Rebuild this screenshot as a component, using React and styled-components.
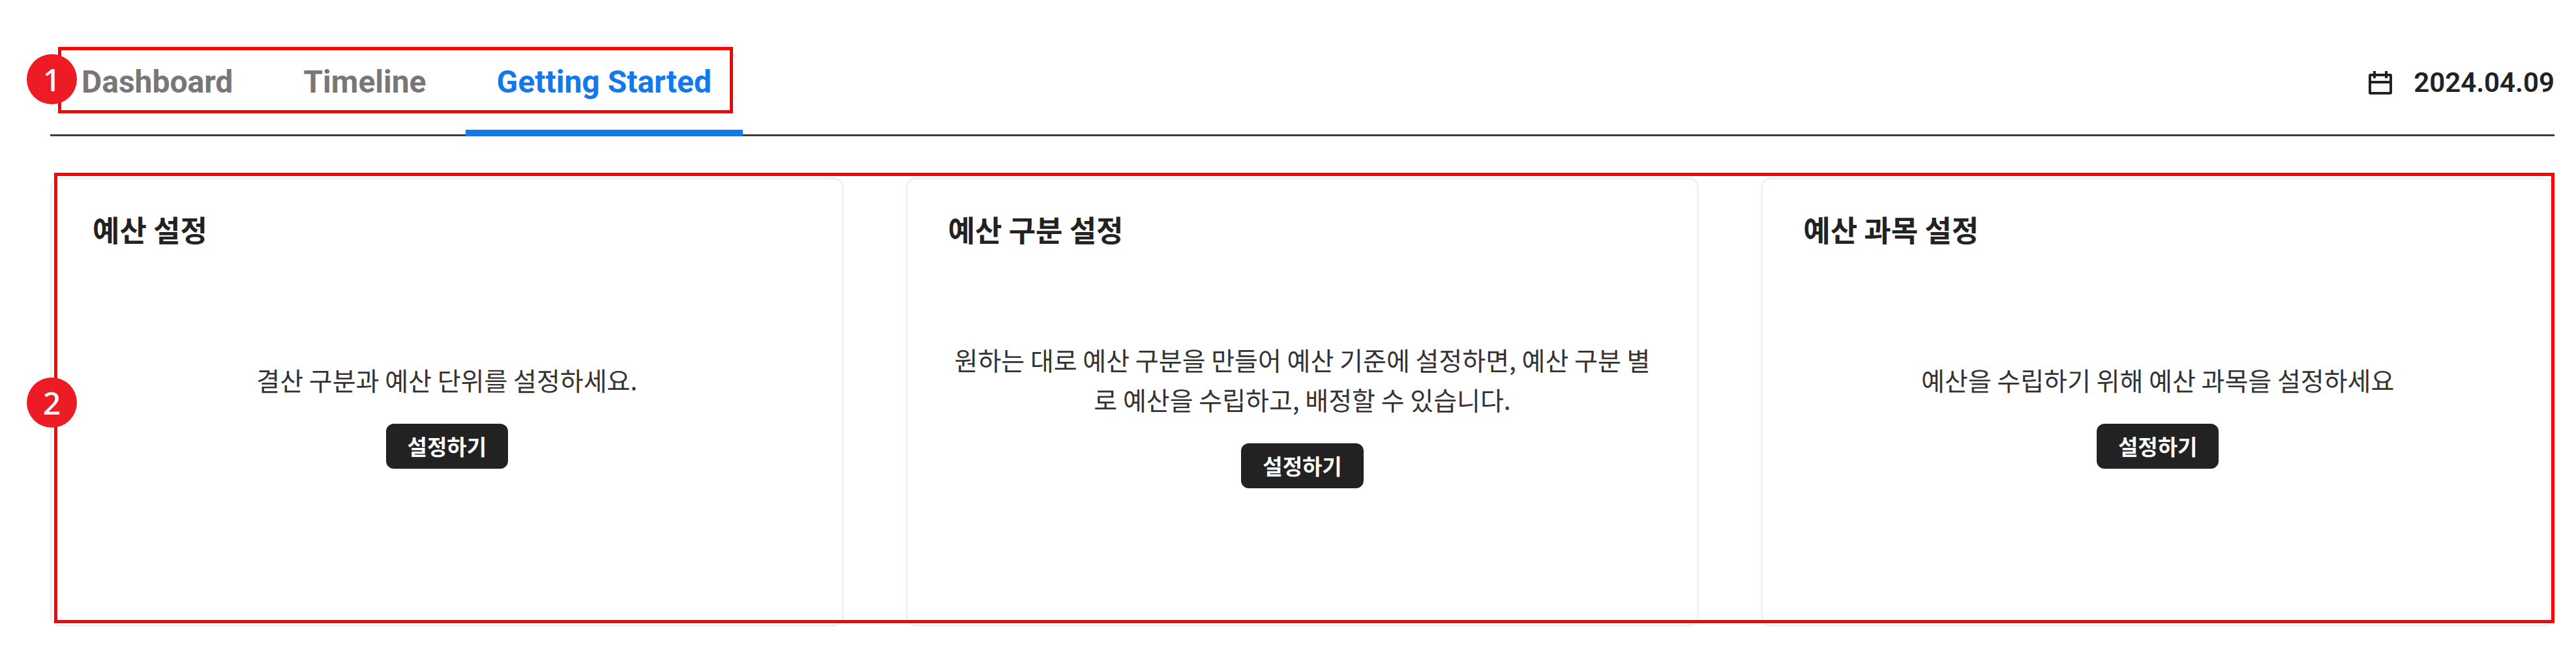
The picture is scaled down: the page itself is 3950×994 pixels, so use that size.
import React, { useState } from 'react';
import styled, { createGlobalStyle } from 'styled-components';

const GlobalStyle = createGlobalStyle`
  * {
    box-sizing: border-box;
  }

  body {
    margin: 0;
    background: #ffffff;
    color: #222222;
    font-family: Roboto, 'Noto Sans CJK KR', sans-serif;
  }

  button {
    border: 0;
    font-family: inherit;
    cursor: pointer;
  }
`;

const Page = styled.main`
  padding: 72px 33px 33px 77px;
`;

const Header = styled.header`
  display: flex;
  justify-content: space-between;
  align-items: flex-start;
  border-bottom: 3px solid #3c3e3f;
`;

const TabList = styled.nav`
  position: relative;
  display: flex;
  gap: 12px;
  margin-bottom: -3px;
`;

const Tab = styled.button`
  padding: 26px 48px 45px;
  border-bottom: 10px solid ${props => (props.$active ? '#1379eb' : 'transparent')};
  background: none;
  color: ${props => (props.$active ? '#1379eb' : '#777777')};
  font-size: 48px;
  font-weight: 700;
  line-height: 56px;
`;

const Today = styled.div`
  display: flex;
  align-items: center;
  gap: 33px;
  padding-top: 30px;
  font-size: 42px;
  font-weight: 600;
  line-height: 50px;
`;

const Cards = styled.section`
  position: relative;
  display: grid;
  grid-template-columns: repeat(3, 1fr);
  gap: 95px;
  margin-top: 63px;
`;

const Card = styled.article`
  display: flex;
  flex-direction: column;
  min-height: 689px;
  padding: 43px 62px 74px;
  border: 3px solid #f0f0f0;
  border-radius: 16px;
  font-family: 'Noto Sans CJK KR', sans-serif;
`;

const CardTitle = styled.h2`
  margin: 0;
  font-size: 45px;
  font-weight: 700;
  line-height: 68px;
`;

const CardBody = styled.div`
  display: flex;
  flex: 1;
  flex-direction: column;
  align-items: center;
  justify-content: center;
  gap: 37px;
`;

const Description = styled.p`
  margin: 0;
  color: #333333;
  font-size: 39px;
  line-height: 61px;
  text-align: center;
`;

const SetupButton = styled.button`
  padding: 10px 33px;
  border-radius: 12px;
  background: #222222;
  color: #ffffff;
  font-size: 33px;
  font-weight: 700;
  line-height: 49px;
`;

/* Red guide marks drawn over the tabs and the cards */
const Guide = styled.div`
  position: absolute;
  inset: ${props => props.$inset};
  border: 5px solid #ff0000;
  pointer-events: none;
`;

const GuideNumber = styled.span`
  position: absolute;
  top: ${props => props.$top};
  left: -36px;
  display: flex;
  align-items: center;
  justify-content: center;
  width: 77px;
  height: 77px;
  border-radius: 50%;
  background: #ed1c24;
  color: #ffffff;
  font-family: 'Noto Sans', sans-serif;
  font-size: 48px;
  font-weight: 500;
  line-height: 77px;
`;

const CalendarIcon = () => (
  <svg width="36" height="36" viewBox="0 0 36 36" fill="none" stroke="#222222" aria-hidden="true">
    <rect x="2" y="6" width="32" height="28" rx="1" strokeWidth="4" />
    <path d="M2 17H34" strokeWidth="4" />
    <path d="M9 0V11M27 0V11" strokeWidth="4" />
  </svg>
);

const tabs = ['Dashboard', 'Timeline', 'Getting Started'];

const cards = [
  { title: '예산 설정', text: '결산 구분과 예산 단위를 설정하세요.' },
  {
    title: '예산 구분 설정',
    text: '원하는 대로 예산 구분을 만들어 예산 기준에 설정하면, 예산 구분 별로 예산을 수립하고, 배정할 수 있습니다.',
  },
  { title: '예산 과목 설정', text: '예산을 수립하기 위해 예산 과목을 설정하세요' },
];

const App = () => {
  const [active, setActive] = useState('Getting Started');

  return (
    <Page>
      <GlobalStyle />
      <Header>
        <TabList>
          {tabs.map(tab => (
            <Tab key={tab} type="button" $active={tab === active} onClick={() => setActive(tab)}>
              {tab}
            </Tab>
          ))}
          <Guide $inset="0 15px 35px 12px" />
          <GuideNumber $top="11px">1</GuideNumber>
        </TabList>
        <Today>
          <CalendarIcon />
          <time dateTime="2024-04-09">2024.04.09</time>
        </Today>
      </Header>
      <Cards>
        {cards.map(card => (
          <Card key={card.title}>
            <CardTitle>{card.title}</CardTitle>
            <CardBody>
              <Description>{card.text}</Description>
              <SetupButton type="button">설정하기</SetupButton>
            </CardBody>
          </Card>
        ))}
        <Guide $inset="-7px 0 5px 6px" />
        <GuideNumber $top="307px">2</GuideNumber>
      </Cards>
    </Page>
  );
};

export default App;
